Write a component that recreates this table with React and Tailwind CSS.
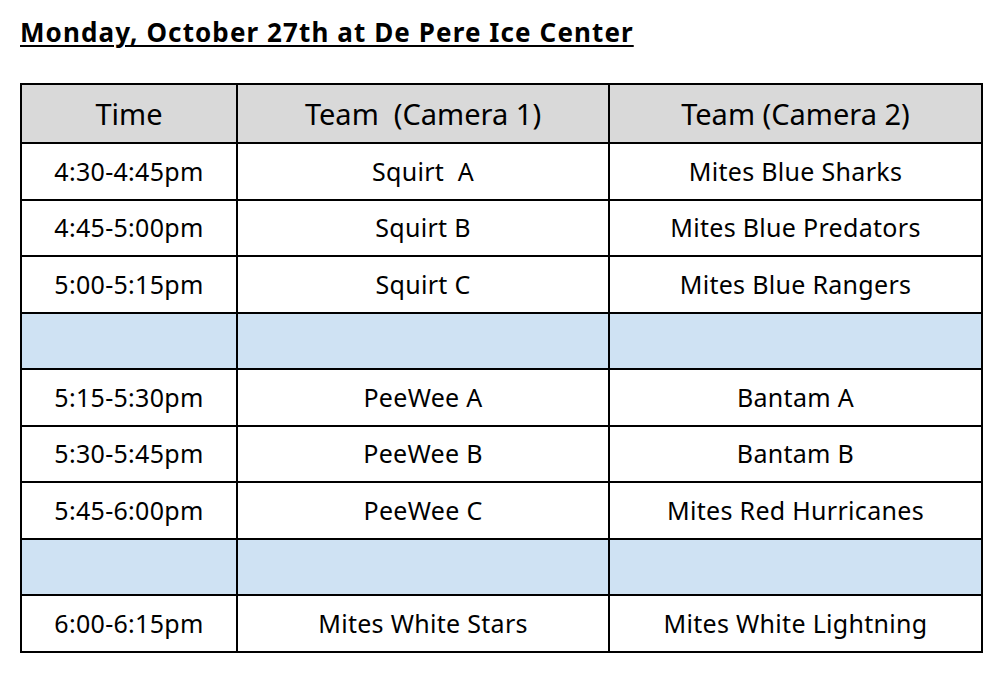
const rows = [
  { time: "4:30-4:45pm", cam1: "Squirt  A", cam2: "Mites Blue Sharks" },
  { time: "4:45-5:00pm", cam1: "Squirt B", cam2: "Mites Blue Predators" },
  { time: "5:00-5:15pm", cam1: "Squirt C", cam2: "Mites Blue Rangers" },
  { spacer: true },
  { time: "5:15-5:30pm", cam1: "PeeWee A", cam2: "Bantam A" },
  { time: "5:30-5:45pm", cam1: "PeeWee B", cam2: "Bantam B" },
  { time: "5:45-6:00pm", cam1: "PeeWee C", cam2: "Mites Red Hurricanes" },
  { spacer: true },
  { time: "6:00-6:15pm", cam1: "Mites White Stars", cam2: "Mites White Lightning" },
];

export default function App() {
  return (
    <div className="min-h-[673px] w-[1000px] bg-white text-black font-['Noto_Sans','Open_Sans',sans-serif]">
      <div className="px-5 pt-[14px]">
        <h1 className="text-[26px] font-bold leading-[36px] tracking-[1.1px] underline underline-offset-[3px] decoration-2">
          Monday, October 27th at De Pere Ice Center
        </h1>

        <table className="mt-[33px] w-[961px] table-fixed border-collapse border-2 border-black">
          <colgroup>
            <col className="w-[216px]" />
            <col className="w-[372px]" />
            <col className="w-[373px]" />
          </colgroup>
          <thead>
            <tr className="h-[59px] bg-[#d9d9d9] text-[29px]">
              <th className="border-2 border-black font-normal">Time</th>
              <th className="border-2 border-black font-normal whitespace-pre">Team  (Camera 1)</th>
              <th className="border-2 border-black font-normal">Team (Camera 2)</th>
            </tr>
          </thead>
          <tbody>
            {rows.map((row, i) =>
              row.spacer ? (
                <tr key={i} className="h-[56.5px] bg-[#cfe2f3]">
                  <td className="border-2 border-black" />
                  <td className="border-2 border-black" />
                  <td className="border-2 border-black" />
                </tr>
              ) : (
                <tr key={i} className="h-[56.5px] text-[25px] tracking-[0.3px] text-center">
                  <td className="border-2 border-black">{row.time}</td>
                  <td className="border-2 border-black whitespace-pre">{row.cam1}</td>
                  <td className="border-2 border-black">{row.cam2}</td>
                </tr>
              )
            )}
          </tbody>
        </table>
      </div>
    </div>
  );
}
